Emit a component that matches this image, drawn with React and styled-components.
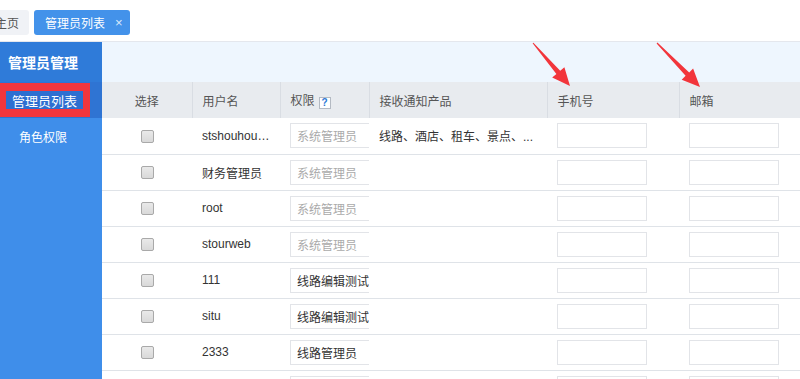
import React from "react";
import styled, { createGlobalStyle } from "styled-components";

const Global = createGlobalStyle`
  html, body { margin: 0; padding: 0; background: #fff; }
  body { font-family: "Liberation Sans", "Noto Sans CJK SC", sans-serif; font-size: 12px; color: #333; }
  * { box-sizing: border-box; }
`;

const Page = styled.div`
  position: relative;
  width: 800px;
  height: 379px;
  overflow: hidden;
  display: flex;
  flex-direction: column;
`;

const TopBar = styled.div`
  height: 42px;
  flex: none;
  border-bottom: 1px solid #e4e7ed;
  display: flex;
  align-items: flex-start;
  gap: 5px;
  padding-top: 10px;
`;

const Tab = styled.div`
  height: 25px;
  display: flex;
  align-items: center;
  gap: 10px;
  padding: ${(p) => (p.$active ? "0 7px 0 11px" : "0 10px")};
  margin-left: ${(p) => (p.$offset ? "-15px" : "0")};
  border-radius: 3px;
  background: ${(p) => (p.$active ? "#4392ea" : "#f0f2f6")};
  color: ${(p) => (p.$active ? "#fff" : "#555")};
  font-size: 12px;
  white-space: nowrap;
`;

const Close = styled.span`
  font-size: 13px;
  color: #dbe9fb;
  line-height: 1;
`;

const Body = styled.div`
  flex: 1;
  display: flex;
  min-height: 0;
`;

const Sidebar = styled.div`
  width: 102px;
  flex: none;
  background: #3f8eea;
  display: flex;
  flex-direction: column;
`;

const SideHead = styled.div`
  height: 40px;
  background: #2f7bd9;
  color: #fff;
  font-size: 14px;
  font-weight: bold;
  display: flex;
  align-items: center;
  padding-left: 8px;
`;

const SideItem = styled.div`
  height: 36px;
  background: ${(p) => (p.$active ? "#2f74d3" : "transparent")};
  color: #fff;
  font-size: 12px;
  display: flex;
  align-items: center;
  padding-left: ${(p) => (p.$active ? "0" : "19px")};
`;

const Marked = styled.span`
  width: 90px;
  height: 34px;
  border: solid #f3363d;
  border-width: 8px 7px 8px 6px;
  background: #2d6fd1;
  display: flex;
  align-items: center;
  justify-content: center;
  font-size: 13px;
  color: #fff;
`;

const Main = styled.div`
  flex: 1;
  min-width: 0;
  display: flex;
  flex-direction: column;
`;

const Band = styled.div`
  height: 40px;
  flex: none;
  background: #eef6fe;
`;

const Table = styled.table`
  width: 100%;
  table-layout: fixed;
  border-collapse: collapse;
`;

const Th = styled.th`
  height: 36px;
  background: #e8ebef;
  color: #555;
  font-weight: normal;
  font-size: 12px;
  text-align: ${(p) => (p.$center ? "center" : "left")};
  padding: 0 ${(p) => (p.$center ? "0" : "10px")};
  border-left: ${(p) => (p.$first ? "none" : "1px solid #d9dde3")};
  white-space: nowrap;
`;

const Td = styled.td`
  height: 36px;
  border-bottom: 1px solid #dfe3e8;
  padding: 0 ${(p) => (p.$center ? "0" : "10px")};
  text-align: ${(p) => (p.$center ? "center" : "left")};
  white-space: nowrap;
  overflow: hidden;
  text-overflow: ${(p) => (p.$ellipsis ? "ellipsis" : "clip")};
  color: #333;
  font-size: 12px;
  vertical-align: middle;
`;

const Check = styled.span`
  display: inline-block;
  width: 13px;
  height: 13px;
  border: 1px solid #a9a9a9;
  border-radius: 2px;
  background: linear-gradient(#e9e9e9, #d9d9d9);
  vertical-align: middle;
`;

const Field = styled.div`
  width: ${(p) => p.$w}px;
  height: 25px;
  border: 1px solid #e2e4e8;
  background: #fff;
  display: flex;
  align-items: center;
  padding-left: 6px;
  color: ${(p) => (p.$placeholder ? "#aaa" : "#333")};
  font-size: 12px;
  overflow: hidden;
`;

const Help = styled.span`
  display: inline-flex;
  align-items: center;
  justify-content: center;
  width: 12px;
  height: 12px;
  margin-left: 4px;
  border: 1px solid #b4bac3;
  background: #fff;
  color: #2b79d6;
  font-size: 10px;
  font-weight: bold;
  line-height: 1;
  vertical-align: -1px;
`;

const Overlay = styled.svg`
  position: absolute;
  left: 0;
  top: 0;
  pointer-events: none;
`;

const rows = [
  { name: "stshouhouweb", role: "系统管理员", ph: true, notify: "线路、酒店、租车、景点、..." },
  { name: "财务管理员", role: "系统管理员", ph: true },
  { name: "root", role: "系统管理员", ph: true },
  { name: "stourweb", role: "系统管理员", ph: true },
  { name: "111", role: "线路编辑测试" },
  { name: "situ", role: "线路编辑测试" },
  { name: "2333", role: "线路管理员" },
  { name: "", role: "" },
];

export default function App() {
  return (
    <Page>
      <Global />
      <TopBar>
        <Tab $offset>主页</Tab>
        <Tab $active>
          管理员列表<Close>×</Close>
        </Tab>
      </TopBar>
      <Body>
        <Sidebar>
          <SideHead>管理员管理</SideHead>
          <SideItem $active>
            <Marked>管理员列表</Marked>
          </SideItem>
          <SideItem>角色权限</SideItem>
        </Sidebar>
        <Main>
          <Band />
          <Table>
            <colgroup>
              <col style={{ width: 90 }} />
              <col style={{ width: 88 }} />
              <col style={{ width: 89 }} />
              <col style={{ width: 178 }} />
              <col style={{ width: 132 }} />
              <col />
            </colgroup>
            <thead>
              <tr>
                <Th $center $first>选择</Th>
                <Th>用户名</Th>
                <Th>
                  权限<Help>?</Help>
                </Th>
                <Th>接收通知产品</Th>
                <Th>手机号</Th>
                <Th>邮箱</Th>
              </tr>
            </thead>
            <tbody>
              {rows.map((r, i) => (
                <tr key={i}>
                  <Td $center>
                    <Check />
                  </Td>
                  <Td $ellipsis>{r.name}</Td>
                  <Td>
                    <Field $w={100} $placeholder={r.ph}>{r.role}</Field>
                  </Td>
                  <Td>{r.notify || ""}</Td>
                  <Td>
                    <Field $w={90} />
                  </Td>
                  <Td>
                    <Field $w={90} />
                  </Td>
                </tr>
              ))}
            </tbody>
          </Table>
        </Main>
      </Body>
      <Overlay width="800" height="379" viewBox="0 0 800 379">
        <polygon
          fill="#f2353b"
          points="532.6,43.3 556.4,74.0 552.2,77.6 570,86 564.4,67.2 560.2,70.8 533.4,42.7"
        />
        <polygon
          fill="#f2353b"
          points="656.6,43.4 685.6,75.8 681.7,79.7 700,87 693.1,68.5 689.2,72.4 657.4,42.6"
        />
      </Overlay>
    </Page>
  );
}
